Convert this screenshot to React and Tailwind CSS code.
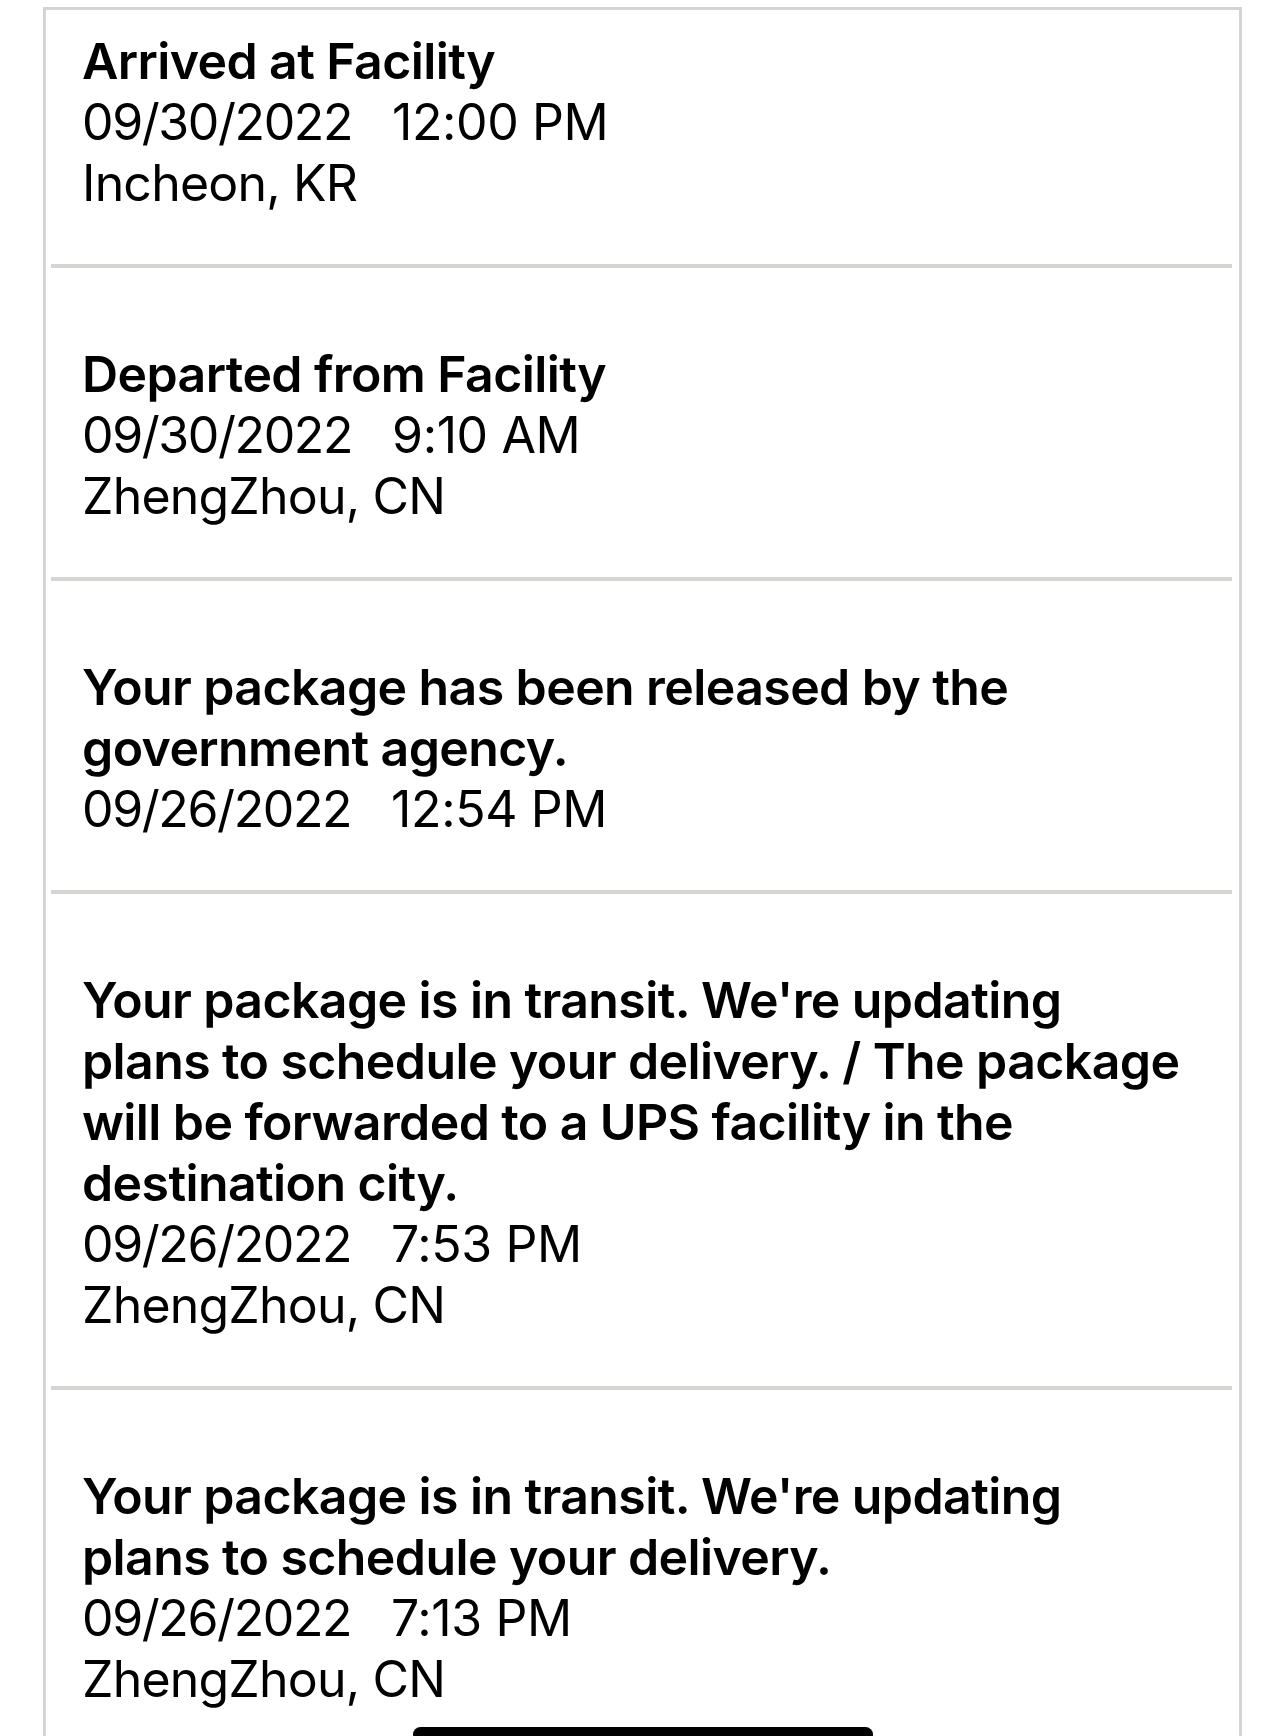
import React from 'react';

const events = [
    {
        title: 'Arrived at Facility',
        date: '09/30/2022',
        time: '12:00 PM',
        place: 'Incheon, KR',
    },
    {
        title: 'Departed from Facility',
        date: '09/30/2022',
        time: '9:10 AM',
        place: 'ZhengZhou, CN',
    },
    {
        title: 'Your package has been released by the government agency.',
        date: '09/26/2022',
        time: '12:54 PM',
    },
    {
        title: "Your package is in transit. We're updating plans to schedule your delivery. / The package will be forwarded to a UPS facility in the destination city.",
        date: '09/26/2022',
        time: '7:53 PM',
        place: 'ZhengZhou, CN',
    },
    {
        title: "Your package is in transit. We're updating plans to schedule your delivery.",
        date: '09/26/2022',
        time: '7:13 PM',
        place: 'ZhengZhou, CN',
    },
];

const EventRow = ({ event, first, last }) => (
    <div
        className={`ml-[5px] mr-[7px] pl-[31px] pr-[46px] ${first ? 'pt-[21px]' : 'pt-[76px]'} pb-[50px] ${last ? '' : 'border-b-[4px] border-[#d6d4d1]'}`}
    >
        <div className="text-[50px] leading-[61px] font-semibold tracking-[-0.6px]">{event.title}</div>
        <div className="text-[50px] leading-[61px] font-normal">
            <span className="mr-[40px] tracking-[-1.4px]">{event.date}</span>
            <span className="tracking-[-0.4px]">{event.time}</span>
        </div>
        {event.place && (
            <div className="text-[50px] leading-[61px] font-normal tracking-[-0.8px]">{event.place}</div>
        )}
    </div>
);

export default function App() {
    return (
        <div
            className="relative h-[1736px] w-[1262px] overflow-hidden bg-white text-black"
            style={{ fontFamily: 'Inter, "Noto Sans", sans-serif' }}
        >
            <div className="ml-[43px] mr-[20px] mt-[7px] border-t-[3px] border-x-[3px] border-[#d4d4d4]">
                {events.map((event, i) => (
                    <EventRow key={i} event={event} first={i === 0} last={i === events.length - 1} />
                ))}
            </div>
            {/* home indicator */}
            <div className="absolute left-[413px] top-[1727px] h-[15px] w-[460px] rounded-full bg-black" />
        </div>
    );
}
